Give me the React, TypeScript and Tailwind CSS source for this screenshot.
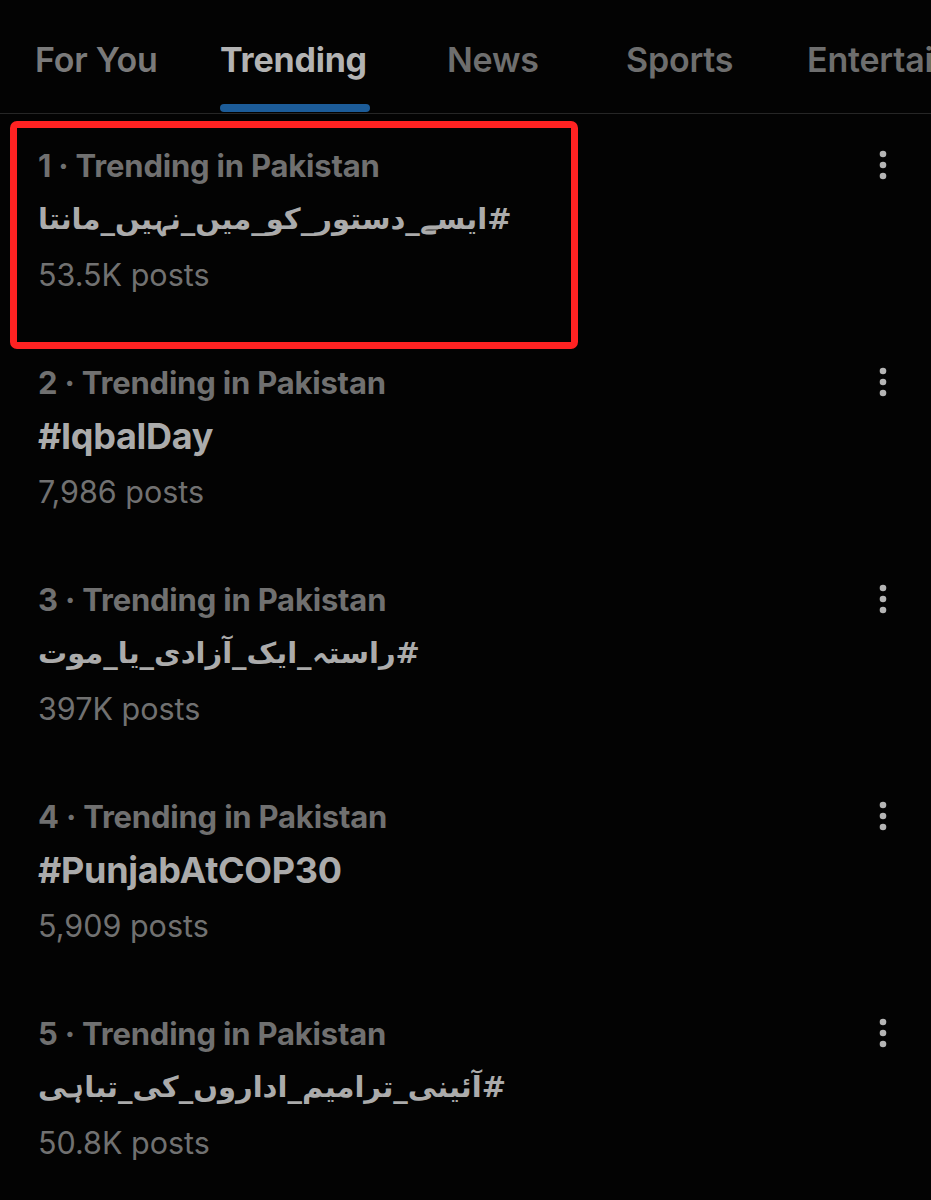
import { useState } from "react";

type Trend = { rank: number; tag: string; posts: string; rtl?: boolean };

const trends: Trend[] = [
  { rank: 1, tag: "#ایسے_دستور_کو_میں_نہیں_مانتا", posts: "53.5K posts", rtl: true },
  { rank: 2, tag: "#IqbalDay", posts: "7,986 posts" },
  { rank: 3, tag: "#راستہ_ایک_آزادی_یا_موت", posts: "397K posts", rtl: true },
  { rank: 4, tag: "#PunjabAtCOP30", posts: "5,909 posts" },
  { rank: 5, tag: "#آئینی_ترامیم_اداروں_کی_تباہی", posts: "50.8K posts", rtl: true },
];

const tabs = [
  { label: "For You", cls: "ml-[35px] w-[122px]" },
  { label: "Trending", cls: "ml-[63px] w-[150px]" },
  { label: "News", cls: "ml-[77px] w-[93px]" },
  { label: "Sports", cls: "ml-[86px] w-[114px]" },
  { label: "Entertainment", cls: "ml-[67px] w-[240px]" },
];

function MoreIcon() {
  return (
    <svg width="8" height="30" viewBox="0 0 8 30" className="text-[#b5b5b5]">
      <circle cx="4" cy="4" r="3.3" fill="currentColor" />
      <circle cx="4" cy="15" r="3.3" fill="currentColor" />
      <circle cx="4" cy="26" r="3.3" fill="currentColor" />
    </svg>
  );
}

function TrendRow({ trend, highlight }: { trend: Trend; highlight?: boolean }) {
  return (
    <div className="relative flex h-[217px] justify-between pl-[38px] pr-[44px] pt-[34px]">
      <div className="flex flex-col">
        <p className="h-[36px] whitespace-nowrap text-[31px] font-bold leading-[36px] tracking-[-0.2px] text-[#707070]">
          {trend.rank} · Trending in Pakistan
        </p>
        {trend.rtl ? (
          <div
            dir="rtl"
            className="mt-[10px] h-[50px] text-left text-[29px] font-bold leading-[50px] text-[#ababab] [font-family:'DejaVu_Sans',sans-serif]"
          >
            {trend.tag}
          </div>
        ) : (
          <p className="mt-[10px] h-[50px] text-[36px] font-bold leading-[50px] tracking-[-0.3px] text-[#ababab]">
            {trend.tag}
          </p>
        )}
        <p className="mt-[13px] h-[36px] text-[30.5px] leading-[36px] text-[#717171]">{trend.posts}</p>
      </div>
      <div className="pt-[2px]">
        <MoreIcon />
      </div>
      {highlight && (
        <div className="pointer-events-none absolute left-[10px] top-[7px] h-[228px] w-[568px] rounded-[7px] border-[7px] border-[#ff2222]" />
      )}
    </div>
  );
}

export default function App() {
  const [active] = useState("Trending");
  return (
    <div className="h-[1200px] w-[931px] overflow-hidden bg-[#030303] [font-family:Inter,'Liberation_Sans',sans-serif]">
      <div className="flex h-[114px] items-start overflow-hidden whitespace-nowrap border-b border-[#262626]">
        {tabs.map((t) => {
          const on = t.label === active;
          return (
            <div key={t.label} className={`relative shrink-0 ${t.cls}`}>
              <p
                className={`mt-[39px] text-[34px] leading-[42px] tracking-[-0.2px] ${
                  on ? "font-bold text-[#b3b3b3]" : "font-semibold text-[#6e6e6e]"
                } ${t.label === "For You" ? "font-normal text-[#7a7a7a]" : ""}`}
              >
                {t.label}
              </p>
              {on && <div className="mt-[23px] h-[8px] w-[150px] rounded-full bg-[#1c5c99]" />}
            </div>
          );
        })}
      </div>
      {trends.map((t, i) => (
        <TrendRow key={t.rank} trend={t} highlight={i === 0} />
      ))}
    </div>
  );
}
